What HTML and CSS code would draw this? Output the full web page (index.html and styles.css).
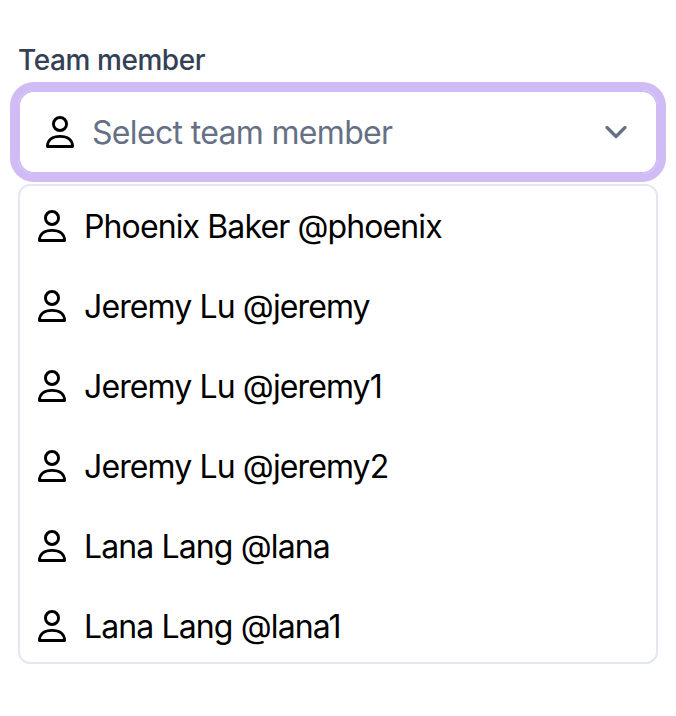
FILE: index.html
```html
<!DOCTYPE html>
<html lang="en">
<head>
<meta charset="utf-8">
<title>Team member</title>
<link rel="stylesheet" href="styles.css">
</head>
<body>
<svg class="sprite" aria-hidden="true">
  <symbol id="user" viewBox="0 0 32 32">
    <circle cx="16" cy="8" r="6.55"/>
    <path d="M3.45 30.55C3.45 23.6 8.6 20.4 16 20.4S28.55 23.6 28.55 30.55Z"/>
  </symbol>
</svg>
<main class="field">
  <div class="label" id="label"><span>Team member</span></div>
  <div class="select" role="combobox" aria-labelledby="label" aria-expanded="true" tabindex="0">
    <svg class="icon"><use href="#user"/></svg>
    <span class="placeholder">Select team member</span>
    <svg class="chevron" viewBox="0 0 40 40"><path d="M11 15.5L20 24.5L29 15.5"/></svg>
  </div>
  <ul class="menu" role="listbox">
    <li class="option" role="option"><svg class="icon"><use href="#user"/></svg><span class="name">Phoenix Baker @phoenix</span></li>
    <li class="option" role="option"><svg class="icon"><use href="#user"/></svg><span class="name">Jeremy Lu @jeremy</span></li>
    <li class="option" role="option"><svg class="icon"><use href="#user"/></svg><span class="name">Jeremy Lu @jeremy1</span></li>
    <li class="option" role="option"><svg class="icon"><use href="#user"/></svg><span class="name">Jeremy Lu @jeremy2</span></li>
    <li class="option" role="option"><svg class="icon"><use href="#user"/></svg><span class="name">Lana Lang @lana</span></li>
    <li class="option" role="option"><svg class="icon"><use href="#user"/></svg><span class="name">Lana Lang @lana1</span></li>
  </ul>
</main>
</body>
</html>
```
FILE: styles.css
```css
* { box-sizing: border-box; }

body {
  margin: 0;
  background: #fff;
  color: #000;
  font-family: Inter, "Liberation Sans", sans-serif;
}

.sprite { position: absolute; width: 0; height: 0; }

.field {
  width: 640px;
  margin-left: 18px;
  padding-top: 40px;
}

.label {
  height: 40px;
  margin-bottom: 10px;
  font-size: 28px;
  font-weight: 500;
  line-height: 40px;
  letter-spacing: -0.42px;
  color: #344054;
  white-space: nowrap;
}

.select {
  display: flex;
  align-items: center;
  gap: 16px;
  height: 84px;
  padding: 0 20px 0 24px;
  border: 2px solid #d0bbf4;
  border-radius: 16px;
  box-shadow: 0 0 0 8px #d0bbf4;
  font-size: 32px;
  line-height: 48px;
}

.placeholder {
  flex: 1;
  padding-top: 2px;
  color: #667085;
  letter-spacing: -0.67px;
  white-space: nowrap;
}

.icon {
  flex: none;
  width: 32px;
  height: 32px;
  fill: none;
  stroke: #000;
  stroke-width: 2.9;
  stroke-linejoin: round;
}

.chevron {
  flex: none;
  width: 40px;
  height: 40px;
  fill: none;
  stroke: #667085;
  stroke-width: 3.2;
  stroke-linecap: round;
  stroke-linejoin: round;
}

.menu {
  height: 480px;
  margin: 10px 0 0;
  padding: 0;
  border: 2px solid #e2e8f0;
  border-radius: 12px;
  overflow: hidden;
  list-style: none;
}

.option {
  display: flex;
  align-items: center;
  gap: 16px;
  height: 80px;
  padding: 0 16px;
  font-size: 32px;
  line-height: 48px;
}

.name {
  padding-top: 2px;
  letter-spacing: -0.88px;
  white-space: nowrap;
}
```
